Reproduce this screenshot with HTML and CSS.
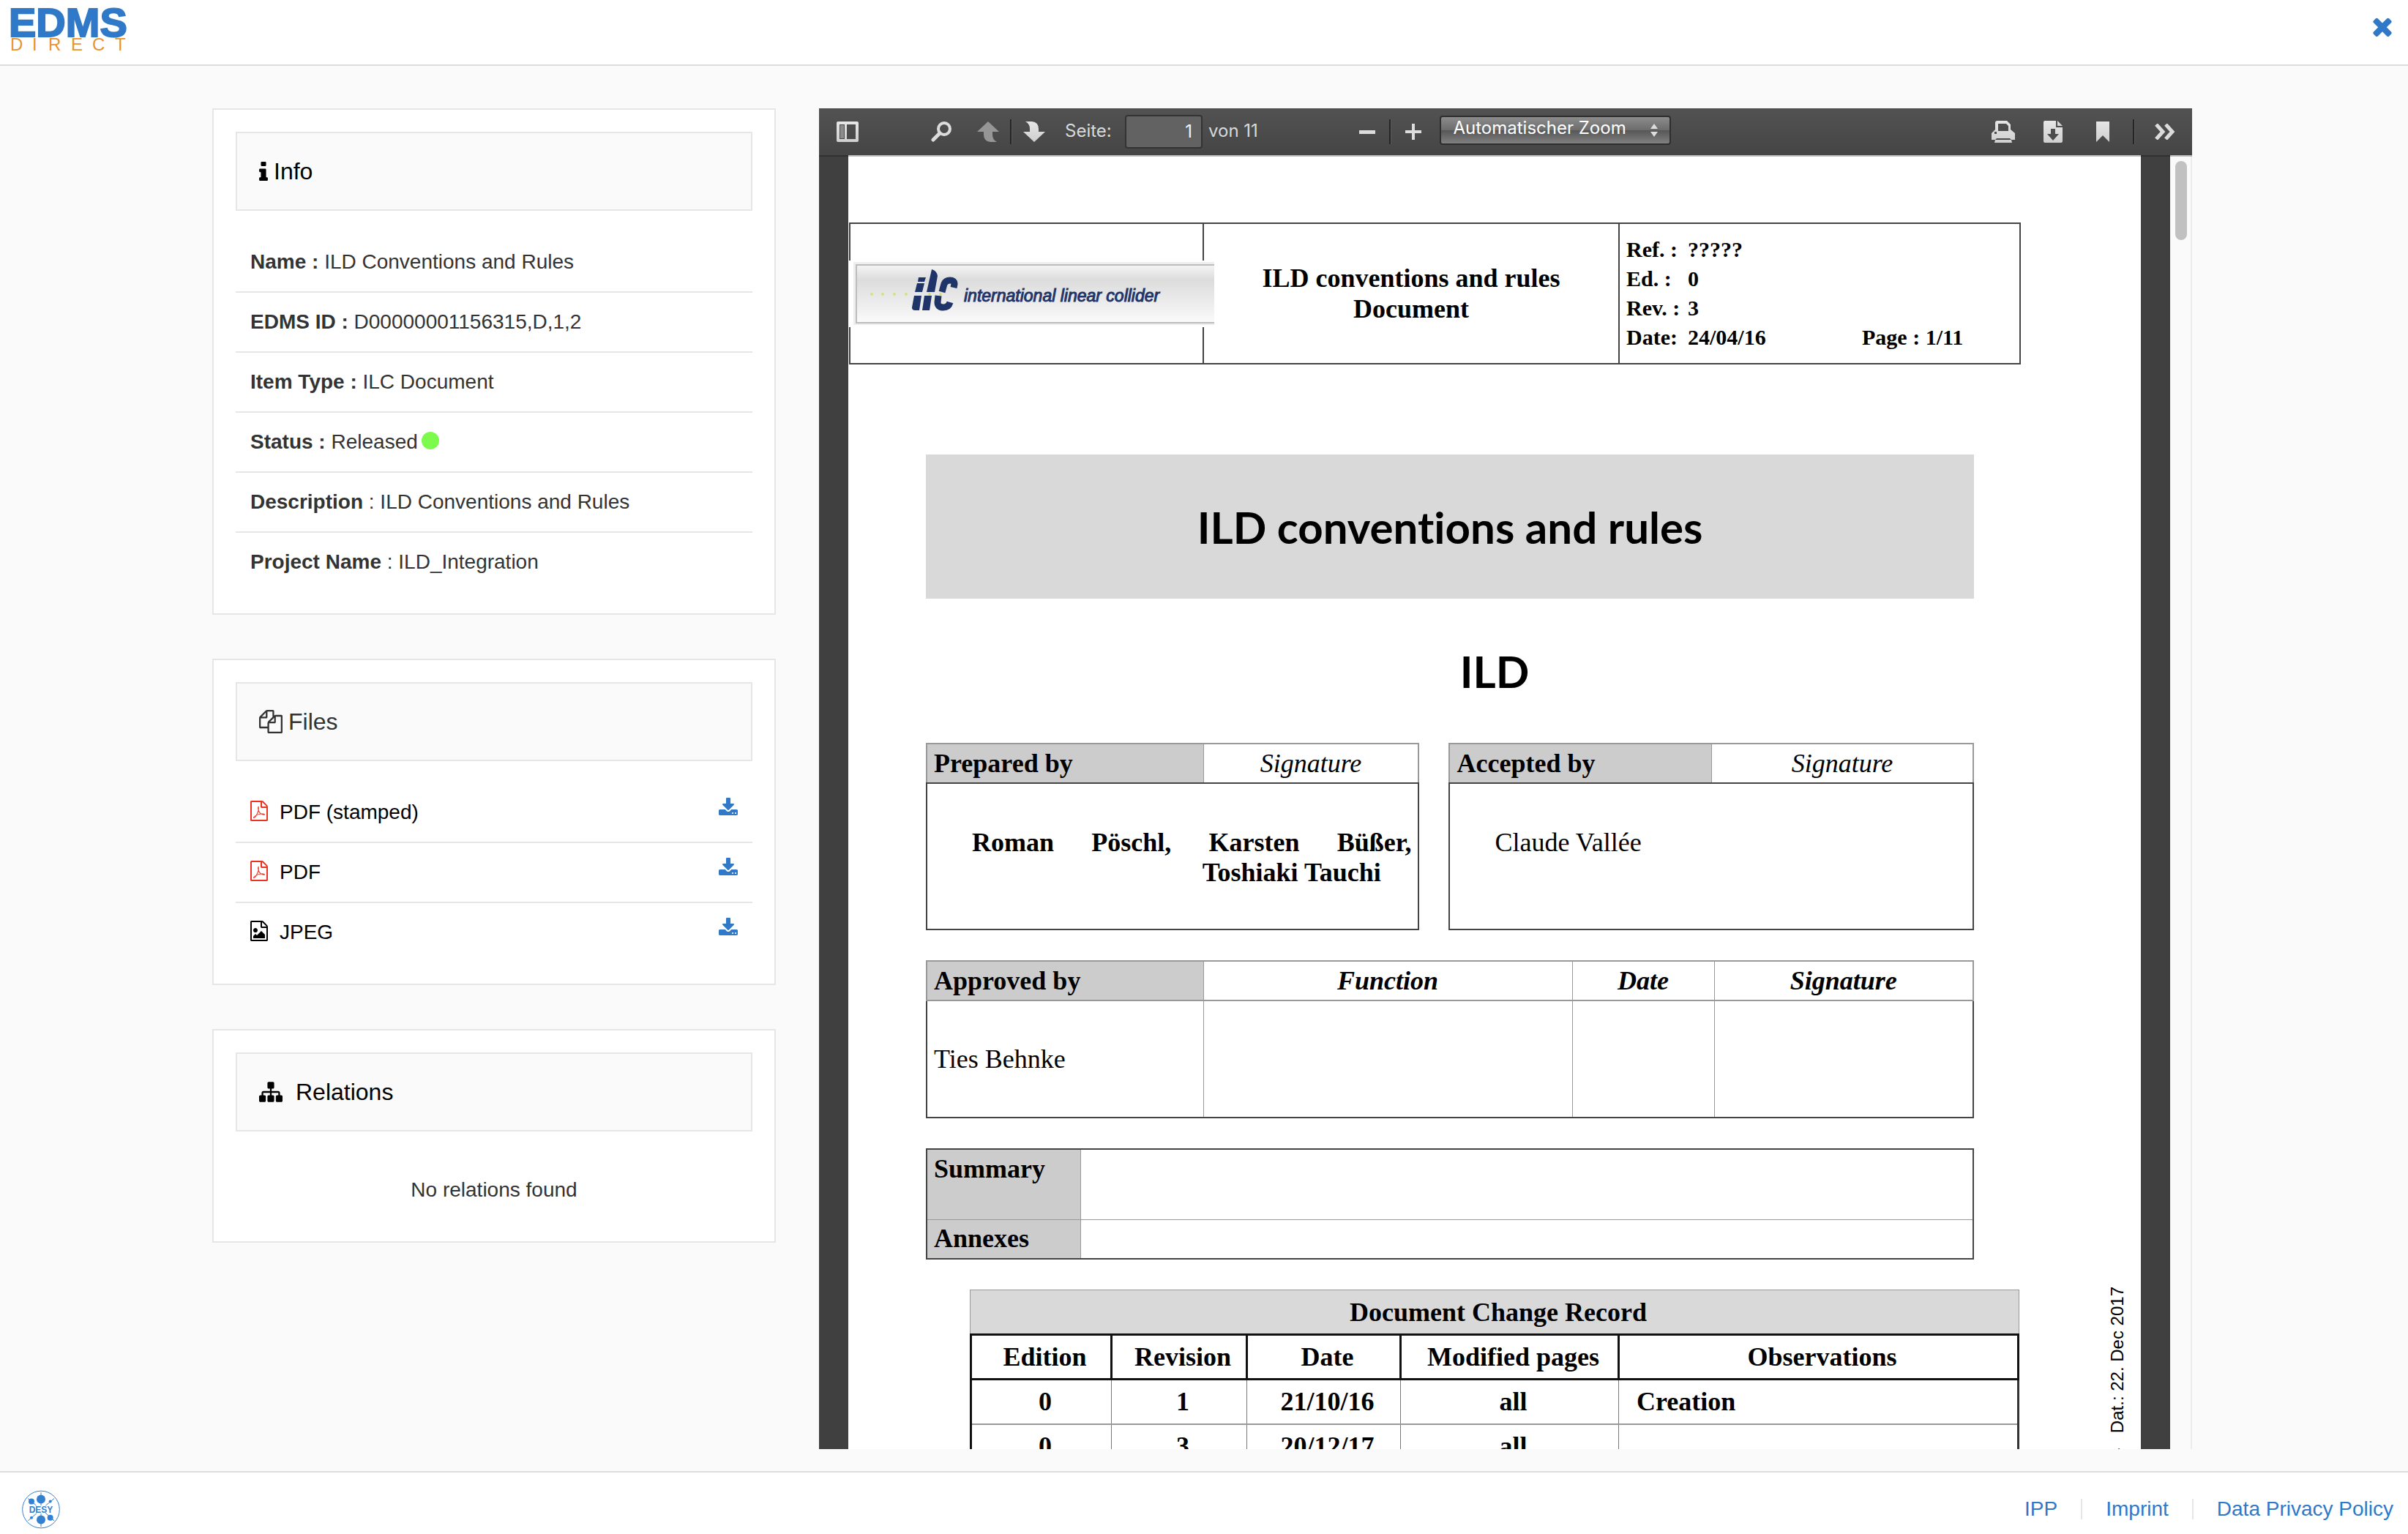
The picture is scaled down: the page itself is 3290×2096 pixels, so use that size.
FILE: index.html
```html
<!DOCTYPE html>
<html lang="en">
<head>
<meta charset="utf-8">
<title>EDMS Direct</title>
<link rel="stylesheet" href="styles.css">
</head>
<body>
<svg class="sprite" aria-hidden="true">
  <defs>
    <linearGradient id="metal" x1="0" y1="0" x2="0" y2="1"><stop offset="0" stop-color="#e6e6e6"/><stop offset="1" stop-color="#cfcfcf"/></linearGradient>
    <symbol id="i-download" viewBox="64 0 1664 1536"><path d="M1344 1344q0-26-19-45t-45-19-45 19-19 45 19 45 45 19 45-19 19-45zm256 0q0-26-19-45t-45-19-45 19-19 45 19 45 45 19 45-19 19-45zm128-224v320q0 40-28 68t-68 28h-1472q-40 0-68-28t-28-68v-320q0-40 28-68t68-28h465l135 136q58 56 136 56t136-56l136-136h464q40 0 68 28t28 68zm-325-569q17 41-14 70l-448 448q-18 19-45 19t-45-19l-448-448q-31-29-14-70 17-39 59-39h256v-448q0-26 19-45t45-19h256q26 0 45 19t19 45v448h256q42 0 59 39z"/></symbol>
    <symbol id="i-pdf" viewBox="128 0 1536 1792"><path d="M1596 380q28 28 48 76t20 88v1152q0 40-28 68t-68 28h-1344q-40 0-68-28t-28-68v-1600q0-40 28-68t68-28h896q40 0 88 20t76 48zm-444-244v376h376q-10-29-22-41l-313-313q-12-12-41-22zm384 1528v-1024h-416q-40 0-68-28t-28-68v-416h-768v1536h1280zm-514-593q33 26 84 56 59-7 117-7 147 0 177 49 16 22 2 52 0 1-1 2l-2 2v1q-6 38-71 38-48 0-115-20t-130-53q-221 24-392 83-153 262-242 262-15 0-28-7l-24-12q-1-1-6-5-10-10-6-36 9-40 56-91.500t132-96.500q14-9 23 6 2 2 2 4 52-85 107-197 68-136 104-262-24-82-30.500-159.500t6.500-127.500q11-40 42-40h22q23 0 35 15 18 21 9 68-2 6-4 8 1 3 1 8v30q-2 123-14 192 55 164 146 238zm-576 411q52-24 137-158-51 40-87.500 84t-49.500 74zm398-920q-15 42-2 132 1-7 7-44 0-3 7-43 1-4 4-8-1-1-1-2-1-2-1-3-1-22-13-36 0 1-1 2v2zm-124 661q135-54 284-81-2-1-13-9.500t-16-13.500q-76-67-127-176-27 86-83 197-30 56-45 83zm646-16q-24-24-140-24 76 28 124 28 14 0 18-1 0-1-2-3z"/></symbol>
  </defs>
</svg>

<header class="topbar">
  <a class="brand" href="#" aria-label="EDMS Direct">
    <svg width="180" height="76" viewBox="0 0 180 76">
      <text class="brand-main" x="0" y="50">EDMS</text>
      <text class="brand-sub" x="2 32 54 85 114 145" y="69">DIRECT</text>
    </svg>
  </a>
  <button class="close" type="button" aria-label="Close">
    <svg width="26" height="28" viewBox="302 238 1188 1316"><path d="M1490 1322q0 40-28 68l-136 136q-28 28-68 28t-68-28l-294-294-294 294q-28 28-68 28t-68-28l-136-136q-28-28-28-68t28-68l294-294-294-294q-28-28-28-68t28-68l136-136q28-28 68-28t68 28l294 294 294-294q28-28 68-28t68 28l136 136q28 28 28 68t-28 68l-294 294 294 294q28 28 28 68z"/></svg>
  </button>
</header>

<main class="content">
  <div class="side">
    <section class="card">
      <h2 class="card-head">
        <svg width="12" height="26" viewBox="576 128 640 1408"><path d="M1216 1344v128q0 26-19 45t-45 19h-512q-26 0-45-19t-19-45v-128q0-26 19-45t45-19h64v-384h-64q-26 0-45-19t-19-45v-128q0-26 19-45t45-19h384q26 0 45 19t19 45v576h64q26 0 45 19t19 45zm-128-1152v192q0 26-19 45t-45 19h-256q-26 0-45-19t-19-45v-192q0-26 19-45t45-19h256q26 0 45 19t19 45z"/></svg>
        Info
      </h2>
      <ul class="rows">
        <li><span><b>Name :</b> ILD Conventions and Rules</span></li>
        <li><span><b>EDMS ID :</b> D00000001156315,D,1,2</span></li>
        <li><span><b>Item Type :</b> ILC Document</span></li>
        <li><span><b>Status :</b> Released<i class="dot"></i></span></li>
        <li><span><b>Description</b> : ILD Conventions and Rules</span></li>
        <li><span><b>Project Name</b> : ILD_Integration</span></li>
      </ul>
    </section>

    <section class="card">
      <h2 class="card-head soft">
        <svg width="32" height="32" viewBox="0 0 1792 1792"><path d="M1696 384q40 0 68 28t28 68v1216q0 40-28 68t-68 28h-960q-40 0-68-28t-28-68v-288h-544q-40 0-68-28t-28-68v-672q0-40 20-88t48-76l408-408q28-28 76-48t88-20h416q40 0 68 28t28 68v328q68-40 128-40h416zm-544 213l-299 299h299v-299zm-640-384l-299 299h299v-299zm196 647l316-316v-416h-384v416q0 40-28 68t-68 28h-416v640h512v-256q0-40 20-88t48-76zm956 804v-1152h-384v416q0 40-28 68t-68 28h-416v640h896z"/></svg>
        Files
      </h2>
      <ul class="rows files">
        <li><svg class="pdf" width="24" height="28"><use href="#i-pdf"/></svg><span>PDF (stamped)</span><a href="#" aria-label="Download PDF (stamped)"><svg width="26" height="24"><use href="#i-download"/></svg></a></li>
        <li><svg class="pdf" width="24" height="28"><use href="#i-pdf"/></svg><span>PDF</span><a href="#" aria-label="Download PDF"><svg width="26" height="24"><use href="#i-download"/></svg></a></li>
        <li><svg width="24" height="28" viewBox="128 0 1536 1792"><path d="M1596 380q28 28 48 76t20 88v1152q0 40-28 68t-68 28h-1344q-40 0-68-28t-28-68v-1600q0-40 28-68t68-28h896q40 0 88 20t76 48zm-444-244v376h376q-10-29-22-41l-313-313q-12-12-41-22zm384 1528v-1024h-416q-40 0-68-28t-28-68v-416h-768v1536h1280zm-128-448v320h-1024v-192l192-192 128 128 384-384zm-832-192q-80 0-136-56t-56-136 56-136 136-56 136 56 56 136-56 136-136 56z"/></svg><span>JPEG</span><a href="#" aria-label="Download JPEG"><svg width="26" height="24"><use href="#i-download"/></svg></a></li>
      </ul>
    </section>

    <section class="card">
      <h2 class="card-head wide">
        <svg width="32" height="28" viewBox="0 128 1792 1536"><path d="M1792 1248v320q0 40-28 68t-68 28h-320q-40 0-68-28t-28-68v-320q0-40 28-68t68-28h96v-192h-512v192h96q40 0 68 28t28 68v320q0 40-28 68t-68 28h-320q-40 0-68-28t-28-68v-320q0-40 28-68t68-28h96v-192h-512v192h96q40 0 68 28t28 68v320q0 40-28 68t-68 28h-320q-40 0-68-28t-28-68v-320q0-40 28-68t68-28h96v-192q0-52 38-90t90-38h512v-192h-96q-40 0-68-28t-28-68v-320q0-40 28-68t68-28h320q40 0 68 28t28 68v320q0 40-28 68t-68 28h-96v192h512q52 0 90 38t38 90v192h96q40 0 68 28t28 68z"/></svg>
        Relations
      </h2>
      <p class="empty">No relations found</p>
    </section>
  </div>

  <section class="viewer">
    <div class="toolbar">
      <div class="tools tools-left">
        <button class="tool sidebar-toggle" type="button" aria-label="Sidebar"><svg width="30" height="28" viewBox="0 0 30 28"><path fill="url(#metal)" fill-rule="evenodd" d="M2 0h26q2 0 2 2v24q0 2-2 2H2q-2 0-2-2V2q0-2 2-2zM4 4v20h7V4zM14 4v20h12V4z"/><path fill="#8b8b8b" d="M5 5h5v18H5z"/></svg></button>
        <button class="tool" type="button" aria-label="Search"><svg width="28" height="28" viewBox="0 0 28 28"><g fill="none" stroke="#dcdcdc"><circle cx="18" cy="10" r="8" stroke-width="4"/><path d="M12 16L3 25" stroke-width="5" stroke-linecap="round"/></g></svg></button>
        <span class="pair">
          <button class="tool" type="button" aria-label="Previous page"><svg width="30" height="28" viewBox="0 0 30 28"><path fill="#969696" d="M15 0L30 14H21V18Q21 25 27 28H18Q9 27 9 18V14H0z"/></svg></button>
          <i class="sep"></i>
          <button class="tool" type="button" aria-label="Next page"><svg width="30" height="28" viewBox="0 0 30 28"><path fill="url(#metal)" d="M15 28L30 14H21V10Q21 1 12 0H3Q9 3 9 10V14H0z"/></svg></button>
        </span>
        <span class="pager"><label for="page">Seite:</label><input id="page" type="text" value="1"><span class="total">von 11</span></span>
      </div>
      <div class="tools">
        <span class="pair">
          <button class="tool" type="button" aria-label="Zoom out"><svg width="22" height="22" viewBox="0 0 22 22"><path fill="#dcdcdc" d="M0 9h22v5H0z"/></svg></button>
          <i class="sep"></i>
          <button class="tool" type="button" aria-label="Zoom in"><svg width="22" height="22" viewBox="0 0 22 22"><path fill="#dcdcdc" d="M9 0h4v9h9v4h-9v9H9v-9H0V9h9z"/></svg></button>
        </span>
        <span class="zoom">
          <select aria-label="Zoom"><option>Automatischer Zoom</option></select>
          <svg width="10" height="18" viewBox="0 0 10 18"><path fill="#ddd" d="M0 7L5 0L10 7zM0 11H10L5 18z"/></svg>
        </span>
      </div>
      <div class="tools tools-right">
        <button class="tool" type="button" aria-label="Print"><svg width="32" height="30" viewBox="0 0 32 30"><path fill="url(#metal)" fill-rule="evenodd" d="M8 0H21L26 5V12L32 17V26H27L28 30H4L5 26H0V17L5 12V3Q5 0 8 0zM9 4V14H23V7L20 4zM7 24L5 26H27L25 24zM4 15V18H7V15z"/></svg></button>
        <button class="tool" type="button" aria-label="Download"><svg width="26" height="30" viewBox="0 0 26 30"><path fill="url(#metal)" fill-rule="evenodd" d="M2 0H17V9H26V28Q26 30 24 30H2Q0 30 0 28V2Q0 0 2 0zM10 11V18H5L13 27L21 18H16V11z"/><path fill="url(#metal)" d="M19 0L26 7H19z"/></svg></button>
        <button class="tool" type="button" aria-label="Bookmark"><svg width="18" height="28" viewBox="0 0 18 28"><path fill="url(#metal)" d="M0 0H18V28L9 19L0 28z"/></svg></button>
        <i class="sep"></i>
        <button class="tool" type="button" aria-label="More tools"><svg width="30" height="22" viewBox="0 0 30 22"><path fill="none" stroke="#dcdcdc" stroke-width="5" d="M3 1L12 11L3 21M16 1L25 11L16 21"/></svg></button>
      </div>
    </div>

    <div class="canvas">
      <article class="page">
        <table class="masthead">
          <colgroup><col class="c30"><col class="c36"><col></colgroup>
          <tr>
            <td class="ilc">
              <svg width="499" height="91" viewBox="0 0 499 91" role="img" aria-label="international linear collider">
                <defs><linearGradient id="bar" x1="0" y1="0" x2="0" y2="1"><stop offset="0" stop-color="#f4f4f4"/><stop offset=".25" stop-color="#dcdcdc"/><stop offset=".5" stop-color="#e6e6e6"/><stop offset="1" stop-color="#fafafa"/></linearGradient></defs>
                <path fill="#fff" d="M0 0h499v91H0z"/>
                <path fill="#eee" d="M6 2h493v86H6z"/>
                <path fill="#bdbdbd" d="M9 5h490v81H9z"/>
                <path fill="url(#bar)" d="M11 7h488v77H11z"/>
                <g fill="#d9e27a"><circle cx="31" cy="46" r="2"/><circle cx="46" cy="46" r="2"/><circle cx="62" cy="46" r="2"/><circle cx="78" cy="46" r="2"/><circle cx="110" cy="46" r="2"/><circle cx="125" cy="46" r="2"/></g>
                <g fill="#1f3468"><path d="M95 23h10l-2 6h-9zM93 31h10l-3 12H90zM89 48h10l-3 20h-6q-4 0-4-4zM113 12q7 2 8 9l-4 22h-11zM103 48h10l-3 20h-10z"/></g>
                <g fill="none" stroke="#1f3468" stroke-width="9"><path d="M127 43L130 32Q132 27 138 27Q144 27 144 32L143 37M122 48L121 57Q121 64 129 64Q136 64 138 57"/></g>
                <text class="ilc-name" x="157" y="56">international linear collider</text>
              </svg>
            </td>
            <td class="masthead-title">ILD conventions and rules<br>Document</td>
            <td>
              <div class="meta">
                <span>Ref. :</span><span>?????</span><span></span>
                <span>Ed. :</span><span>0</span><span></span>
                <span>Rev. :</span><span>3</span><span></span>
                <span>Date:</span><span>24/04/16</span><span>Page : 1/11</span>
              </div>
            </td>
          </tr>
        </table>

        <div class="body">
          <h1 class="banner">ILD conventions and rules</h1>
          <h2 class="project">ILD</h2>

          <div class="signoff">
            <table class="grid">
              <colgroup><col class="w378"><col></colgroup>
              <thead><tr><th class="key">Prepared by</th><th class="sig">Signature</th></tr></thead>
              <tbody><tr><td class="people" colspan="2"><p class="spread">Roman Pöschl, Karsten Büßer,</p><p class="last">Toshiaki Tauchi</p></td></tr></tbody>
            </table>
            <table class="grid">
              <colgroup><col class="w358"><col></colgroup>
              <thead><tr><th class="key">Accepted by</th><th class="sig">Signature</th></tr></thead>
              <tbody><tr><td class="people plain" colspan="2"><p>Claude Vallée</p></td></tr></tbody>
            </table>
          </div>

          <table class="grid approved">
            <colgroup><col class="w378"><col><col class="w194"><col class="w354"></colgroup>
            <thead><tr><th class="key">Approved by</th><th class="bi">Function</th><th class="bi">Date</th><th class="bi">Signature</th></tr></thead>
            <tbody><tr><td>Ties Behnke</td><td></td><td></td><td></td></tr></tbody>
          </table>

          <table class="grid summary">
            <colgroup><col class="w210"><col></colgroup>
            <tr class="tall"><th class="key">Summary</th><td></td></tr>
            <tr><th class="key">Annexes</th><td></td></tr>
          </table>
        </div>

        <table class="changes">
          <caption>Document Change Record</caption>
          <colgroup><col class="w192"><col class="w185"><col class="w210"><col class="w298"><col></colgroup>
          <thead><tr><th>Edition</th><th>Revision</th><th>Date</th><th>Modified pages</th><th>Observations</th></tr></thead>
          <tbody>
            <tr><td>0</td><td>1</td><td>21/10/16</td><td>all</td><td class="note">Creation</td></tr>
            <tr><td>0</td><td>3</td><td>20/12/17</td><td>all</td><td></td></tr>
          </tbody>
        </table>
        <p class="stamp">-   Dat.: 22. Dec 2017</p>
      </article>
      <div class="scrollbar"><i></i></div>
    </div>
  </section>
</main>

<footer class="footer">
  <svg width="52" height="53" viewBox="0 0 156 158" role="img" aria-label="DESY">
    <circle cx="78" cy="79" r="76" fill="none" stroke="#3480d0" stroke-width="3"/>
    <path stroke="#3480d0" stroke-width="3" d="M78 9V62M78 96V150M25 34L59 63M132 34L97 63M25 125L60 95M132 125L96 93"/>
    <g fill="#3480d0"><circle cx="78" cy="37" r="18"/><circle cx="78" cy="121" r="18"/><circle cx="39" cy="46" r="12"/><circle cx="116" cy="46" r="6"/><circle cx="39" cy="113" r="6"/><circle cx="116" cy="113" r="12"/>
    <text class="desy" x="78" y="93">DESY</text></g>
  </svg>
  <nav class="links"><a href="#">IPP</a><a href="#">Imprint</a><a href="#">Data Privacy Policy</a></nav>
</footer>
</body>
</html>
```

FILE: styles.css
```css
:root {
  --blue: #3079c8;
  --line: #e6e6e6;
  --ink: #444;
  --faint: #999;
  --sans: "Liberation Sans", Arial, sans-serif;
  --serif: "Liberation Serif", "Times New Roman", serif;
}

* { box-sizing: border-box; }
h1, h2, p, ul { margin: 0; padding: 0; }
svg { display: block; flex: none; }
a { color: var(--blue); text-decoration: none; }
button { border: 0; padding: 0; background: none; cursor: pointer; }
table { border-collapse: collapse; table-layout: fixed; }

body {
  display: flex;
  flex-direction: column;
  min-height: 100vh;
  margin: 0;
  background: #fafafa;
  color: #333;
  font: 28px/40px var(--sans);
}

.sprite { position: absolute; width: 0; height: 0; }

/* Top bar */
.topbar {
  display: flex;
  justify-content: space-between;
  align-items: flex-start;
  height: 90px;
  padding: 0 22px 0 12px;
  border-bottom: 2px solid #ddd;
  background: #fff;
}
.brand svg { overflow: visible; }
.brand-main { font: bold 56px var(--sans); fill: var(--blue); stroke: var(--blue); stroke-width: 2px; }
.brand-sub { font: 24px var(--sans); fill: #e8942f; }
.close { margin-top: 22px; fill: var(--blue); }

/* Content */
.content {
  display: grid;
  grid-template-columns: 770fr 1876fr;
  gap: 59px;
  align-items: start;
  flex: 1;
  padding: 58px 295px 30px 290px;
}
.side { display: grid; gap: 60px; }
.card { padding: 30px; border: 2px solid var(--line); background: #fff; }
.card-head {
  display: flex;
  align-items: center;
  gap: 8px;
  height: 108px;
  margin-bottom: 30px;
  padding: 0 30px;
  border: 2px solid var(--line);
  background: #fafafa;
  color: #000;
  font-size: 32px;
  font-weight: normal;
}
.card-head svg { fill: currentColor; }
.soft { color: #333; }
.wide { gap: 18px; }
.rows { list-style: none; }
.rows li {
  display: flex;
  align-items: center;
  gap: 16px;
  min-height: 82px;
  padding: 0 20px;
  border-bottom: 2px solid var(--line);
}
.rows li:last-child { min-height: 80px; border-bottom: 0; }
.files { color: #000; }
.files a { margin: 0 0 16px auto; fill: var(--blue); }
.files > li > svg { margin-bottom: 4px; }
.pdf { fill: #ec3323; }
.dot {
  display: inline-block;
  width: 24px;
  height: 24px;
  margin-left: 5px;
  border-radius: 50%;
  background: #7dfb4c;
  vertical-align: -1px;
}
.empty { padding: 60px 0 20px; text-align: center; }
.card-head + .empty { margin-top: -30px; padding-top: 60px; }

/* Viewer */
.viewer {
  display: flex;
  flex-direction: column;
  height: calc(100vh - 264px);
  overflow: hidden;
}
.toolbar {
  position: relative;
  z-index: 1;
  display: grid;
  grid-template-columns: 1fr auto 1fr;
  align-items: center;
  height: 64px;
  padding: 0 3px 0 17px;
  background: linear-gradient(#525252, #454545);
  box-shadow: 0 2px 0 rgba(0, 0, 0, .25);
  color: #d9d9d9;
  font: 24px/28px Inter, var(--sans);
}
.tools { display: flex; align-items: center; }
.tools-left { gap: 20px; }
.tools-right { justify-content: flex-end; gap: 24px; padding-right: 12px; }
.tool { display: grid; place-items: center; width: 44px; height: 44px; }
.sidebar-toggle { margin-right: 64px; }
.pair { display: flex; align-items: center; gap: 8px; }
.sep { width: 3px; height: 34px; border-right: 1px solid #5a5a5a; background: #252525; }
.tools-right .sep { margin: 0 -5px; }
.pager { display: flex; align-items: center; }
.pager label { width: 82px; }
.pager label, .total { padding-bottom: 2px; }
.pager input {
  width: 106px;
  height: 46px;
  margin-right: 8px;
  padding: 0 12px 2px;
  border: 2px solid #333;
  border-radius: 4px;
  background: #626262;
  color: #f2f2f2;
  font: inherit;
  text-align: right;
}
.zoom { position: relative; align-self: flex-start; margin-left: 14px; }
.zoom select {
  display: block;
  width: 316px;
  height: 40px;
  padding: 0 17px 6px;
  border: 2px solid #2e2e2e;
  border-radius: 4px;
  appearance: none;
  background: linear-gradient(#8c8c8c, #6c6c6c 50%, #575757 51%, #808080);
  color: #fff;
  font: inherit;
}
.zoom svg { position: absolute; top: 11px; right: 18px; pointer-events: none; }

.canvas { display: flex; flex: 1; min-height: 0; padding-left: 40px; background: #404040; }
.page {
  position: relative;
  flex: 1;
  padding-top: 92px;
  background: #fff;
  color: #000;
  font: 36px/41px var(--serif);
}
.scrollbar {
  width: 30px;
  margin-left: 40px;
  padding: 8px 7px;
  border-right: 2px solid #ececec;
  background: #fafafa;
}
.scrollbar i { display: block; width: 16px; height: 108px; border-radius: 8px; background: #c1c1c1; }

/* Document head */
.masthead { width: calc(100% - 165px); height: 194px; margin-left: 1px; }
.masthead td { padding: 0; border: 2px solid var(--ink); }
.masthead .ilc svg { position: relative; margin-left: -2px; }
.c30 { width: 483px; }
.c36 { width: 568px; }
.ilc-name { font: italic 23px var(--sans); fill: #1f3468; stroke: #1f3468; stroke-width: 1px; }
.masthead-title { font-weight: bold; line-height: 42px; text-align: center; }
.meta {
  display: grid;
  grid-template-columns: 84px 238px auto;
  padding-left: 9px;
  font: bold 30px/40px var(--serif);
}

/* Document body */
.body { margin: 0 228px 0 106px; }
.banner, .project { font: bold 60px/80px Lato, sans-serif; font-variant-ligatures: none; text-align: center; }
.banner { margin-top: 123px; padding: 59px 0 58px; background: #d9d9d9; }
.project { padding: 59px 0 58px 122px; }
.signoff { display: grid; grid-template-columns: 674fr 717fr; gap: 40px; margin-bottom: 41px; }
.grid { width: 100%; border: 2px solid var(--ink); }
.grid th, .grid td { height: 54px; padding: 0 9px; border: 1px solid var(--faint); text-align: left; }
.grid thead { border: 2px solid var(--faint); }
.grid .key { background: #ccc; }
.grid .sig { font-weight: normal; font-style: italic; text-align: center; }
.grid .bi { font-style: italic; text-align: center; }
.grid .people { height: 200px; padding: 60px 9px 0 61px; border: 2px solid var(--ink); font-weight: bold; vertical-align: top; }
.grid .plain { font-weight: normal; }
.spread { text-align: justify; text-align-last: justify; }
.last { padding-left: 273px; text-align: center; }
.approved { margin-bottom: 41px; }
.approved tbody td { height: 160px; }
.summary { margin-bottom: 41px; }
.summary .key { border-right: 0; }
.summary .tall th { height: 96px; padding-top: 6px; vertical-align: top; }
.w192 { width: 192px; }
.w194 { width: 194px; }
.w185 { width: 185px; }
.w210 { width: 210px; }
.w298 { width: 298px; }
.w354 { width: 354px; }
.w358 { width: 358px; }
.w378 { width: 378px; }

.changes { width: calc(100% - 332px); margin-left: 166px; font-weight: bold; text-align: center; }
.changes caption { height: 60px; padding-left: 10px; border: 1px solid var(--faint); border-bottom: 0; background: #d9d9d9; line-height: 60px; }
.changes th, .changes td { height: 61px; padding: 0 0 0 10px; border: 1px solid #777; }
.changes tr { border-left: 3px solid #111; border-right: 3px solid #333; }
.changes thead th { border: 3px solid #111; }
.changes td { border-bottom: 2px solid var(--faint); }
.changes .note { padding-left: 24px; text-align: left; }

.stamp {
  position: absolute;
  top: 1546px;
  right: 18px;
  writing-mode: vertical-rl;
  transform: rotate(180deg);
  font: 24px/28px var(--sans);
  white-space: pre;
}

/* Footer */
.footer {
  display: flex;
  justify-content: space-between;
  align-items: center;
  height: 86px;
  padding: 16px 20px 0 30px;
  border-top: 2px solid #ddd;
  background: #fff;
}
.desy { font: bold 36px var(--sans); text-anchor: middle; }
.links { display: flex; line-height: 28px; }
.links a { padding: 0 32px; border-right: 2px solid var(--line); }
.links a:last-child { padding-right: 0; border: 0; }
```
